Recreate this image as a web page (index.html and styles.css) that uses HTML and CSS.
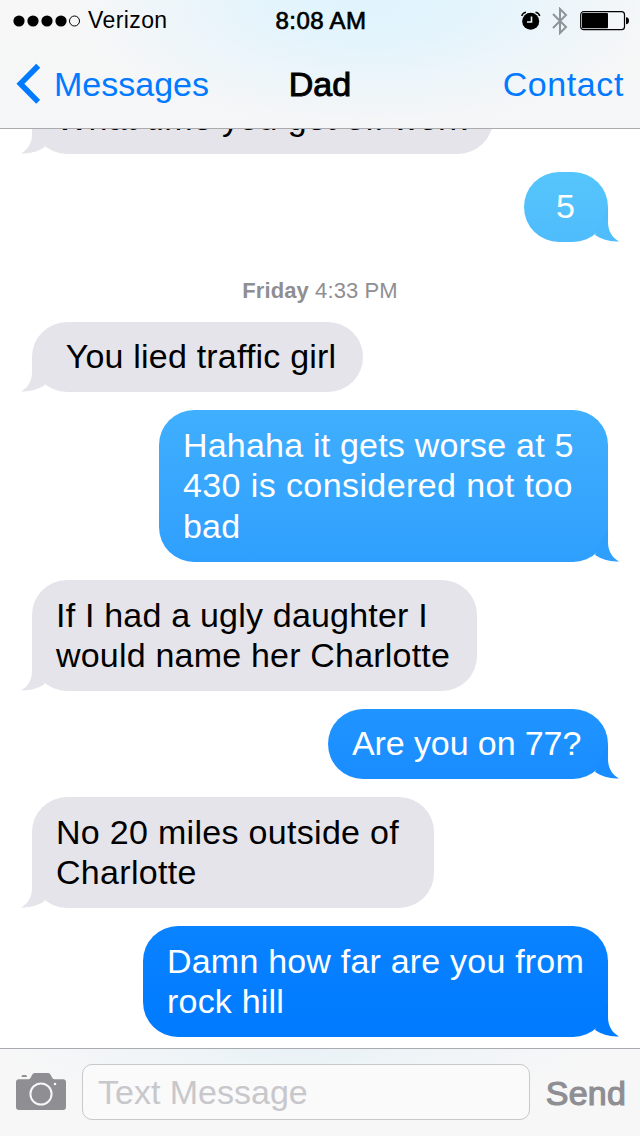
FILE: index.html
```
<!DOCTYPE html>
<html lang="en">
<head>
    <meta charset="UTF-8">
    <title>Messages</title>
    <link rel="stylesheet" href="styles.css">
</head>
<body>
<svg class="defs" width="0" height="0">
    <symbol id="tail" viewBox="0 0 40 40">
        <path d="M28 5V20C28 29 32 35.5 39 39.4C30 40 22 37.5 15 33Z"/>
    </symbol>
</svg>

<header class="header">
    <div class="status">
        <div class="status-left">
            <svg width="70" height="14" viewBox="0 0 70 14">
                <circle cx="7" cy="7" r="5.6"/>
                <circle cx="21" cy="7" r="5.6"/>
                <circle cx="35" cy="7" r="5.6"/>
                <circle cx="49" cy="7" r="5.6"/>
                <circle cx="62.5" cy="7" r="5" fill="none" stroke="#000"/>
            </svg>
            <span class="carrier">Verizon</span>
        </div>
        <span class="clock">8:08 AM</span>
        <div class="status-right">
            <svg width="20" height="20" viewBox="0 0 20 20">
                <circle cx="9.7" cy="10.2" r="8.5"/>
                <path d="M10.5 5.5V11H6" fill="none" stroke="#e8f4fa" stroke-width="1.6"/>
                <path d="M.7 5Q1.5 2 5 1.3M14.5 1.3Q18 2 18.7 5" fill="none" stroke="#000" stroke-width="1.5"/>
            </svg>
            <svg class="bluetooth" width="18" height="28" viewBox="0 0 18 28">
                <path d="M2 7L15 20L9 26V2L15 8L2 21" fill="none" stroke="#8e9499" stroke-width="2"/>
            </svg>
            <svg class="battery" width="50" height="20" viewBox="0 0 50 20">
                <rect x=".7" y=".7" width="43.8" height="18" rx="3" fill="none" stroke="#000" stroke-width="1.2"/>
                <rect x="2" y="2" width="26" height="15.3" rx="1"/>
                <path d="M46 6.2Q49 6.5 49 9.7Q49 13 46 13.2Z"/>
            </svg>
        </div>
    </div>
    <nav class="nav">
        <a class="back">
            <svg width="24" height="42" viewBox="0 0 24 42">
                <path d="M22.2 2.8L4.4 20.8L22.2 38.8" fill="none" stroke="#007aff" stroke-width="5.6"/>
            </svg>
            <span>Messages</span>
        </a>
        <span class="title">Dad</span>
        <a class="contact">Contact</a>
    </nav>
</header>

<main class="log">
    <div class="bubble received w-time">What time you get off work<svg class="tail"><use href="#tail"/></svg></div>
    <div class="bubble sent blue-1 w-five">5<svg class="tail"><use href="#tail"/></svg></div>
    <div class="date"><b>Friday</b> 4:33 PM</div>
    <div class="bubble received w-lied">&nbsp;You lied traffic girl<svg class="tail"><use href="#tail"/></svg></div>
    <div class="bubble sent three blue-2 w-worse">Hahaha it gets worse at 5<br><span class="wide">430 is considered not too</span><br>bad<svg class="tail"><use href="#tail"/></svg></div>
    <div class="bubble received two w-ugly">If I had a ugly daughter I<br>would name her Charlotte<svg class="tail"><use href="#tail"/></svg></div>
    <div class="bubble sent blue-3 w-77">Are you on 77?<svg class="tail"><use href="#tail"/></svg></div>
    <div class="bubble received two w-miles">No 20 miles outside of<br>Charlotte<svg class="tail"><use href="#tail"/></svg></div>
    <div class="bubble sent two blue-4 w-damn">Damn how far are you from<br>rock hill<svg class="tail"><use href="#tail"/></svg></div>
</main>

<footer class="compose">
    <svg class="camera" width="50" height="38" viewBox="0 0 50 38">
        <path fill="#8e8e93" d="M3 6.3H13C15.5 5.5 15.5 0 19 0H32C35 0 35.5 5.5 38 6.3H47Q50 6.3 50 9.3V34Q50 37 47 37H3Q0 37 0 34V9.3Q0 6.3 3 6.3ZM7 2H9.5Q11 2 11 4H5.5Q5.5 2 7 2Z"/>
        <circle cx="25" cy="21" r="10.6" fill="none" stroke="#f7f7f7" stroke-width="2"/>
        <circle cx="39" cy="11" r="1.3" fill="#f7f7f7"/>
    </svg>
    <div class="field">Text Message</div>
    <span class="send">Send</span>
</footer>
</body>
</html>
```

FILE: styles.css
```
* {
    box-sizing: border-box;
}
body {
    margin: 0;
    width: 640px;
    height: 1136px;
    display: flex;
    flex-direction: column;
    overflow: hidden;
    background: #fff;
    color: #000;
    font-family: "Liberation Sans", Arial, sans-serif;
    font-size: 34px;
    white-space: nowrap;
}
svg {
    display: block;
    flex: none;
}
.defs {
    position: absolute;
}

/* top bar */
.header {
    height: 129px;
    flex: none;
    border-bottom: 1px solid #a9abad;
    background: radial-gradient(ellipse 300px 125px at 370px 0, #e0f4fd 0%, #e4f4fc 35%, rgba(247, 247, 247, 0) 100%), linear-gradient(#f7f7f7, #f5f6f7);
}
.status {
    height: 40px;
    display: grid;
    grid-template-columns: 1fr auto 1fr;
    align-items: center;
    padding: 1px 10px 0 12px;
}
.status-left, .status-right {
    display: flex;
    align-items: center;
}
.status-right {
    justify-content: flex-end;
}
.carrier {
    margin-left: 6px;
    font-size: 23px;
    letter-spacing: 0.4px;
}
.clock {
    font-size: 24px;
    letter-spacing: 0.4px;
    -webkit-text-stroke: 0.7px #000;
}
.bluetooth {
    margin-left: 10px;
}
.battery {
    margin-left: 11px;
}
.nav {
    height: 88px;
    display: grid;
    grid-template-columns: 1fr auto 1fr;
    align-items: center;
    padding: 0 16px;
}
.back {
    display: flex;
    align-items: center;
    gap: 14px;
    color: #007aff;
}
.title {
    -webkit-text-stroke: 1px #000;
}
.contact {
    color: #007aff;
    text-align: right;
    letter-spacing: 0.6px;
}

/* conversation */
.log {
    flex: 1;
    min-height: 0;
    display: flex;
    flex-direction: column;
    justify-content: flex-end;
    gap: 18px;
    padding: 0 32px 11px;
    overflow: hidden;
}
.bubble {
    position: relative;
    flex: none;
    height: 70px;
    padding: 14px 24px 0;
    border-radius: 35px;
    line-height: 40.5px;
    letter-spacing: 0.2px;
}
.two {
    height: 111px;
    padding-top: 15px;
    line-height: 40px;
}
.three {
    height: 152px;
    padding-top: 14.8px;
}
.wide {
    letter-spacing: 0.4px;
}
.received {
    align-self: flex-start;
    background: #e5e4ea;
    fill: #e5e4ea;
}
.sent {
    align-self: flex-end;
    color: #fff;
}
.tail {
    position: absolute;
    right: -12px;
    bottom: 0;
    width: 40px;
    height: 40px;
}
.received .tail {
    right: auto;
    left: -12px;
    transform: scaleX(-1);
}
.blue-1 {
    background: linear-gradient(#56c5fb, #4fbcfc);
    fill: #4fbcfc;
}
.blue-2 {
    background: linear-gradient(#40affd, #2f9ffe);
    fill: #2f9ffe;
}
.blue-3 {
    background: linear-gradient(#2094ff, #198dff);
    fill: #198dff;
}
.blue-4 {
    background: linear-gradient(#0983ff, #007aff);
    fill: #007aff;
}
.w-time {
    width: 461px;
    letter-spacing: 0.35px;
}
.w-five {
    width: 84px;
    padding-left: 32px;
}
.w-lied {
    width: 331px;
}
.w-worse {
    width: 449px;
}
.w-ugly {
    width: 445px;
}
.w-77 {
    width: 280px;
    letter-spacing: -0.1px;
}
.w-miles {
    width: 402px;
    letter-spacing: 0.3px;
}
.w-damn {
    width: 465px;
}
.date {
    flex: none;
    height: 26px;
    margin: 18px 0 0;
    text-align: center;
    font-size: 22px;
    letter-spacing: 0.1px;
    line-height: 26px;
    color: #8e8e93;
}
.date b {
    font-weight: bold;
}

/* compose bar */
.compose {
    height: 88px;
    flex: none;
    display: flex;
    align-items: center;
    border-top: 1px solid #a9abb0;
    padding: 0 14px 1px 16px;
    background: radial-gradient(ellipse 300px 60px at 300px 0, #e9f2f7, rgba(247, 247, 247, 0)), #f7f7f7;
}
.camera {
    margin-right: 16px;
}
.field {
    width: 448px;
    height: 56px;
    padding-left: 15px;
    border: 1px solid #c8c8cd;
    border-radius: 10px;
    background: #fafafa;
    color: #c7c7cc;
    line-height: 55px;
}
.send {
    margin: 2px 0 0 16px;
    color: #8e8e93;
    letter-spacing: 0.2px;
    -webkit-text-stroke: 1.2px #8e8e93;
}
```
